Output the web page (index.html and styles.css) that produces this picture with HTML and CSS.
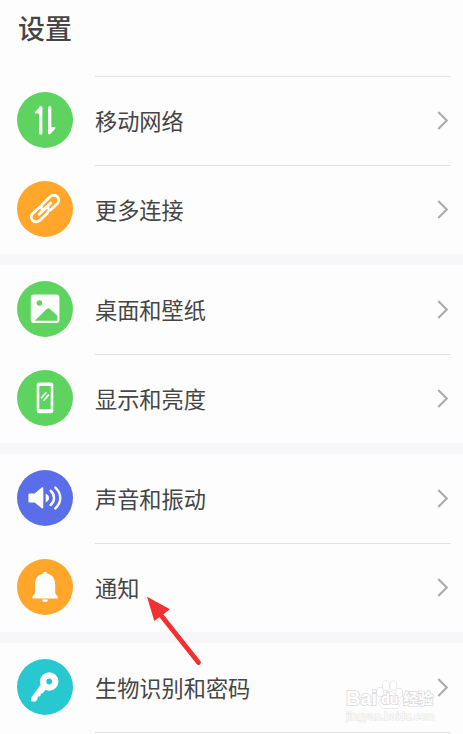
FILE: index.html
```html
<!DOCTYPE html>
<html lang="zh-CN">
<head>
  <meta charset="UTF-8">
  <title>设置</title>
  <link rel="stylesheet" href="styles.css">
</head>
<body>
  <h1 class="title">设置</h1>

  <div class="group">
    <div class="row">
      <svg class="icon green" viewBox="0 0 56 56">
        <path class="line" stroke-width="3.3" d="M23.7 16V41.2M32.7 15.6V40.6"/>
        <path d="M25.3 15.2V21L19 21.6Q17.2 21.2 18.2 19.8L23.2 14.6Q24.6 13.8 25.3 15.2ZM31.1 41.4V35.6L37.4 35Q39.2 35.4 38.2 36.8L33.2 42Q31.8 42.8 31.1 41.4Z" fill="#fff"/>
      </svg>
      <div class="cell"><span>移动网络</span><svg class="chevron" viewBox="0 0 10 18"><path d="M1 1 9 9 1 17"/></svg></div>
    </div>
    <div class="row">
      <svg class="icon orange" viewBox="0 0 56 56">
        <g class="line" stroke-width="2.8" transform="translate(28 27.6) rotate(-44)">
          <path d="M-3 -4.9H-12.2A4.9 4.9 0 0 0 -12.2 4.9H-1.5A4.9 4.9 0 0 0 3 0H-8"/>
          <path d="M3 4.9H12.2A4.9 4.9 0 0 0 12.2 -4.9H1.5A4.9 4.9 0 0 0 -3 0H8"/>
        </g>
      </svg>
      <div class="cell"><span>更多连接</span><svg class="chevron" viewBox="0 0 10 18"><path d="M1 1 9 9 1 17"/></svg></div>
    </div>
  </div>

  <div class="group">
    <div class="row">
      <svg class="icon green" viewBox="0 0 56 56">
        <rect x="13.8" y="13.6" width="28.6" height="28.4" rx="3" fill="#fff"/>
        <circle cx="22.4" cy="22" r="2.8" fill="#5fd35f"/>
        <path d="M17.8 39.8 29.4 28.2Q31.3 26.4 33.2 28.2L40.4 34.8V39.8Z" fill="#5fd35f"/>
      </svg>
      <div class="cell"><span>桌面和壁纸</span><svg class="chevron" viewBox="0 0 10 18"><path d="M1 1 9 9 1 17"/></svg></div>
    </div>
    <div class="row">
      <svg class="icon green" viewBox="0 0 56 56">
        <rect x="19.7" y="12.6" width="16.6" height="30.6" rx="2.4" fill="#fff"/>
        <rect x="22.3" y="16" width="11.4" height="23.2" fill="#5fd35f"/>
        <path class="line" stroke-width="1.7" d="M24.6 27.6 29 22.8M26.9 30.2 31.4 25.1"/>
      </svg>
      <div class="cell"><span>显示和亮度</span><svg class="chevron" viewBox="0 0 10 18"><path d="M1 1 9 9 1 17"/></svg></div>
    </div>
  </div>

  <div class="group">
    <div class="row">
      <svg class="icon blue" viewBox="0 0 56 56">
        <path d="M12.4 23.4H17.6L24.8 17.5Q26.3 16.8 26.3 18.4V37.3Q26.3 39 24.8 38.2L17.6 32.4H12.4Q11.4 32.4 11.4 31.4V24.4Q11.4 23.4 12.4 23.4Z" fill="#fff"/>
        <path d="M28.7 23.8Q32 25 32 28T28.7 32.2Z" fill="#fff"/>
        <path class="line" stroke-width="2.4" d="M33.6 20.8C38.2 24.5 38.2 31.3 33.6 35M38.3 17.6C44.9 23.4 44.9 32.6 38.3 38.4"/>
      </svg>
      <div class="cell"><span>声音和振动</span><svg class="chevron" viewBox="0 0 10 18"><path d="M1 1 9 9 1 17"/></svg></div>
    </div>
    <div class="row">
      <svg class="icon orange" viewBox="0 0 56 56">
        <path d="M26 14.8A2.1 2.1 0 0 1 30.2 14.8C35.4 15.8 38.2 20 38.2 25V34.4L40.8 37.8Q41.6 39.4 40 39.4H16.2Q14.6 39.4 15.4 37.8L18 34.4V25C18 20 20.8 15.8 26 14.8ZM25.3 40.6H30.9A2.8 2.5 0 0 1 25.3 40.6Z" fill="#fff"/>
      </svg>
      <div class="cell"><span>通知</span><svg class="chevron" viewBox="0 0 10 18"><path d="M1 1 9 9 1 17"/></svg></div>
    </div>
  </div>

  <div class="group">
    <div class="row">
      <svg class="icon teal" viewBox="0 0 56 56">
        <path d="M23.4 26 14.8 37.8Q13.6 39.4 14 42.3L18.3 42.7 20.7 40 20.8 37.5 23.4 37.2 23.7 34.8 25.7 34.2 28.7 30.8Z" fill="#fff"/>
        <circle cx="32.2" cy="22.5" r="6.1" fill="none" stroke="#fff" stroke-width="6.4"/>
      </svg>
      <div class="cell"><span>生物识别和密码</span><svg class="chevron" viewBox="0 0 10 18"><path d="M1 1 9 9 1 17"/></svg></div>
    </div>
    <div class="row next"><div class="cell"></div></div>
  </div>

  <svg class="pointer" viewBox="0 0 56 70">
    <path d="M14 18 52.5 66.5" stroke="#f23032" stroke-width="4.8" stroke-linecap="round"/>
    <path d="M1 .7 24 13.3 8.3 25Z" fill="#f23032"/>
  </svg>

  <div class="watermark">
    <div class="brand">
      <span>Bai</span>
      <span class="paw">
        <svg viewBox="0 0 27 30">
          <ellipse cx="4" cy="12" rx="3.2" ry="4.3"/>
          <ellipse cx="10" cy="5.6" rx="3.2" ry="4.6"/>
          <ellipse cx="17.4" cy="5.8" rx="3.2" ry="4.6"/>
          <ellipse cx="23.2" cy="13" rx="3.2" ry="4.3"/>
          <path d="M13.5 11.4C17.5 11.4 18 15 21 17.5 25.5 21.5 24.5 28 19 28H8C2.5 28 1.5 21.5 6 17.5 9 15 9.500 11.400 13.500 11.400Z"/>
        </svg>
        <span class="du">du</span>
      </span>
      <span class="cn">经验</span>
    </div>
    <div class="site">jingyan.baidu.com</div>
  </div>
</body>
</html>
```
FILE: styles.css
```css
*{box-sizing:border-box;}

body{
  margin:0;
  height:734px;
  overflow:hidden;
  background:#fdfdfd;
  color:#454545;
  font-family:"Noto Sans CJK SC",sans-serif;
}

.title{
  height:76px;
  margin:0;
  padding:8px 0 0 18px;
  font-size:27px;
  line-height:40px;
  font-weight:500;
}

.group + .group{border-top:11px solid #f7f6f9;}

.row{display:flex;align-items:center;height:89px;padding:0 12px 0 17px;}
.row.next{height:2px;padding-left:95px;}

.icon{flex:none;width:56px;height:56px;margin:-1px 22px 0 0;border-radius:50%;}
.icon .line{fill:none;stroke:#fff;stroke-linecap:round;stroke-linejoin:round;}
.green{background:#5fd35f;}
.orange{background:#ffa62b;}
.blue{background:#5b6eea;}
.teal{background:#27c8d0;}

.cell{
  display:flex;
  flex:1;
  align-items:center;
  justify-content:space-between;
  height:100%;
  padding-right:3px;
  font-size:22.2px;
  line-height:32px;
}
.cell span{margin-top:-2px;}
.title + .group .cell,
.row + .row .cell{border-top:1px solid #e3e3e4;}
.title + .group .cell span,
.row + .row .cell span{margin-top:-3px;}

.chevron{width:11px;height:19px;margin-top:-1px;}
.chevron path{fill:none;stroke:#aaa;stroke-width:1.9;}

.pointer{position:absolute;left:146px;top:596px;width:56px;height:70px;}

/* watermark over the last row */
.watermark{
  position:absolute;
  left:346px;
  top:680px;
  width:92px;
  color:#fff;
  font-family:"Liberation Sans",sans-serif;
  font-weight:bold;
  paint-order:stroke fill;
}
.brand{display:flex;align-items:flex-end;height:30px;font-size:20px;line-height:24px;-webkit-text-stroke:1.6px #dadada;}
.paw{position:relative;width:27px;height:30px;margin:0 -1px 0 -1px;}
.paw svg{display:block;width:27px;height:30px;fill:#fff;stroke:#d6d6d6;stroke-width:1;}
.du{position:absolute;left:5px;top:11px;font-size:14px;line-height:16px;}
.cn{margin-left:1px;font-family:"Noto Sans CJK SC",sans-serif;font-size:15px;}
.site{font-size:11px;line-height:12px;font-weight:normal;-webkit-text-stroke:1px #e4e4e4;}
```
